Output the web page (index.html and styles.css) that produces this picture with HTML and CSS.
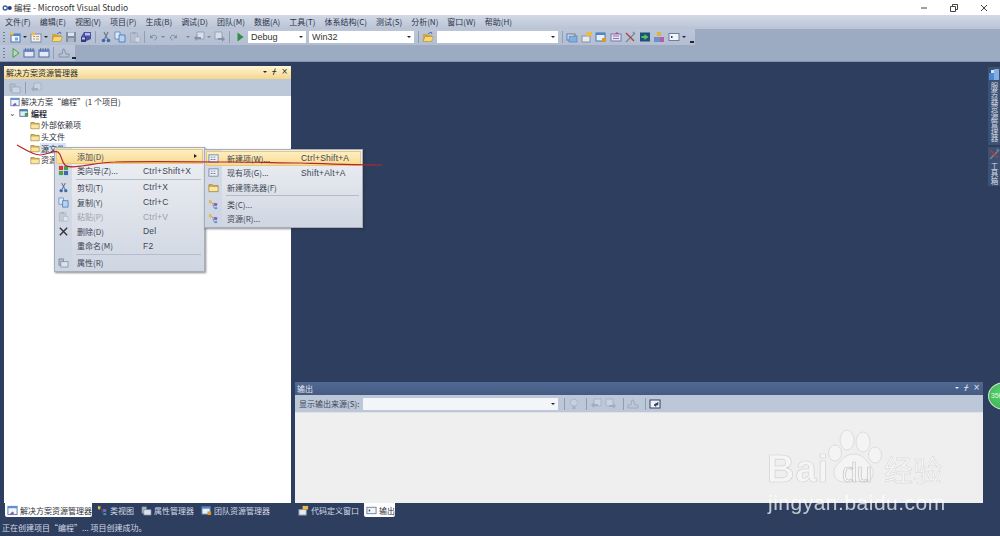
FILE: index.html
```html
<!DOCTYPE html>
<html lang="zh-CN">
<head>
<meta charset="utf-8">
<title>编程 - Microsoft Visual Studio</title>
<link rel="stylesheet" href="styles.css">
</head>
<body>
<svg class="defs" width="0" height="0">
  <defs>
    <symbol id="folder" viewBox="0 0 12 12"><path d="M1 3h4l1 1h5v6.500H1z" fill="#d9b04e" stroke="#8a7436" stroke-width=".7"/><path d="M1.500 5.500h9v4.500h-9z" fill="#f9e6a0"/></symbol>
    <symbol id="open" viewBox="0 0 12 12"><path d="M1 3h4l1 1h4v6.500H1z" fill="#d2a53f"/><path d="M1 10.500l2-5h8.500l-2 5z" fill="#f6d876" stroke="#a9842f" stroke-width=".5"/><path d="M6 3l3-2 1 2" stroke="#3f6fb5" fill="none"/></symbol>
    <symbol id="sheet" viewBox="0 0 12 12"><rect x="1" y="2" width="10" height="8" fill="#eef1f6" stroke="#7c8aa5"/><path d="M3 4h2v1H3zM6 4h2v1H6zM3 6.500h2v1H3zM6 6.500h2v1H6z" fill="#5f77a8"/></symbol>
    <symbol id="newproj" viewBox="0 0 12 12"><rect x="2" y="3" width="9" height="8" fill="#f1f4f9" stroke="#4f73ad"/><rect x="2" y="3" width="9" height="2" fill="#4f86cf"/><rect x="6" y="6.500" width="3" height="3" fill="#75a3dc"/><path d="M3 0l.8 1.700L5.500 2.200 4 3.300l.5 1.700L3 4 1.500 5 2 3.300.5 2.200l1.700-.5z" fill="#f0bf3b"/></symbol>
    <symbol id="additem" viewBox="0 0 12 12"><rect x="1" y="3" width="10" height="8" fill="#eef1f6" stroke="#7c8aa5"/><path d="M3 5h2v1H3zM6 5h3v1H6zM3 7.500h2v1H3zM6 7.500h3v1H6z" fill="#c79a4a"/><path d="M3 0l.8 1.700 1.700.5L4 3.300l.5 1.700L3 4 1.500 5 2 3.300.5 2.200l1.700-.5z" fill="#f0bf3b"/></symbol>
    <symbol id="floppy" viewBox="0 0 12 12"><path d="M1 1h10v10H1z" fill="#7f8fa8"/><rect x="3" y="1.500" width="6" height="3.500" fill="#dfe4ec"/><rect x="3" y="7" width="6" height="4" fill="#aab5c6"/></symbol>
    <symbol id="saveall" viewBox="0 0 12 12"><path d="M4 1h7v7l-7 3H1V6z" fill="#4c4fa8"/><path d="M5 2h5v2.500H5z" fill="#b9bce6"/><path d="M1 6h5v5H1z" fill="#35387f"/><path d="M2 6.500h3v2H2z" fill="#c9cbed"/></symbol>
    <symbol id="cut" viewBox="0 0 12 12"><path d="M4 1l3.500 7M8 1L4.500 8" stroke="#66768f" stroke-width="1.100" fill="none"/><circle cx="3.500" cy="9.500" r="1.800" fill="#3c68ad"/><circle cx="8.500" cy="9.500" r="1.800" fill="#3c68ad"/></symbol>
    <symbol id="copy" viewBox="0 0 12 12"><path d="M1 1h5v7H1z" fill="#dfe9f7" stroke="#5c86bd" stroke-width=".8"/><path d="M5 4h6v7H5z" fill="#b9d2f0" stroke="#3f6fb5" stroke-width=".8"/></symbol>
    <symbol id="paste" viewBox="0 0 12 12"><path d="M1.500 2h7v9h-7z" fill="#b8c0cd" stroke="#808b9e" stroke-width=".7"/><rect x="3.500" y="1" width="3" height="2" fill="#808b9e"/><path d="M6 6h5v5H6z" fill="#eef1f5" stroke="#8f99aa" stroke-width=".7"/></symbol>
    <symbol id="undo" viewBox="0 0 12 12"><path d="M3 6c1-3 6-3 7 0 .5 2-1 4-3 4" fill="none" stroke="#7e8ca5" stroke-width="1.300"/><path d="M1.500 3v4.500H6z" fill="#7e8ca5"/></symbol>
    <symbol id="redo" viewBox="0 0 12 12"><path d="M9 6C8 3 3 3 2 6c-.5 2 1 4 3 4" fill="none" stroke="#7e8ca5" stroke-width="1.300"/><path d="M10.500 3v4.500H6z" fill="#7e8ca5"/></symbol>
    <symbol id="nav" viewBox="0 0 12 12"><path d="M4 1h7v7H4z" fill="#d9dee8" stroke="#8592a8" stroke-width=".7"/><path d="M1 7l3-3v2h4v2H4v2z" fill="#8592a8"/></symbol>
    <symbol id="navr" viewBox="0 0 12 12"><path d="M1 1h7v7H1z" fill="#d9dee8" stroke="#8592a8" stroke-width=".7"/><path d="M11 8L8 5v2H4v2h4v2z" fill="#8592a8"/></symbol>
    <symbol id="cal" viewBox="0 0 12 12"><rect x="1" y="3" width="10" height="7" fill="#e4eaf5" stroke="#4b6aa6"/><rect x="1" y="3" width="10" height="2" fill="#6d8cc6"/><path d="M2.500 1v3M5 1v3M7.500 1v3M10 1v3" stroke="#4b6aa6" stroke-width=".8"/></symbol>
    <symbol id="clean" viewBox="0 0 12 12"><path d="M1 10h10V7H8L6 2 5 2 4 7H1z" fill="none" stroke="#8592a8"/></symbol>
    <symbol id="solution" viewBox="0 0 12 12"><rect x="1" y="1.500" width="10" height="9" fill="#f2f5fa" stroke="#5578b3"/><rect x="1" y="1.500" width="10" height="2" fill="#5f8fd3"/><path d="M3 10l3-3 2 2-3 2z" fill="#8a58a8"/></symbol>
    <symbol id="project" viewBox="0 0 12 12"><rect x="1" y="2" width="9" height="8" fill="#e3ecf6" stroke="#456e8e"/><rect x="1" y="2" width="9" height="2" fill="#4d7da6"/><rect x="7" y="6" width="4" height="4" fill="#4e9a62"/></symbol>
    <symbol id="wizard" viewBox="0 0 12 12"><rect x="1" y="1" width="4.500" height="4.500" fill="#d8382e"/><rect x="6.500" y="1" width="4.500" height="4.500" fill="#45a34a"/><rect x="1" y="6.500" width="4.500" height="4.500" fill="#45a34a"/><rect x="6.500" y="6.500" width="4.500" height="4.500" fill="#3c68ad"/></symbol>
    <symbol id="props" viewBox="0 0 12 12"><path d="M1 2h5v7H1z" fill="#aeb9cb" stroke="#6f7d95" stroke-width=".7"/><path d="M3 5h8v6H3z" fill="#dce2ec" stroke="#6f7d95" stroke-width=".7"/></symbol>
    <symbol id="cls" viewBox="0 0 12 12"><path d="M1 1l3 .5L3.500 5 1 4.500z" fill="#e4b93d"/><path d="M7 4l3.500 1-1 3L6 7z" fill="#8a5fb8"/><path d="M7 9h3v2H7z" fill="#4a9ad0"/><path d="M4 4l3 2M5 6l2 4" stroke="#667" stroke-width=".6"/></symbol>
    <symbol id="tool1" viewBox="0 0 12 12"><rect x="1" y="3" width="8" height="6" fill="#e7edf6" stroke="#5578b3"/><rect x="3" y="5" width="8" height="6" fill="#7fb0de" stroke="#4c76ab" stroke-width=".6"/><path d="M7 2l2 1.500L7 5z" fill="#d8a636"/></symbol>
    <symbol id="tool2" viewBox="0 0 12 12"><rect x="1" y="5" width="8" height="6" fill="#e8ebf0" stroke="#8592a8"/><path d="M5 1h6v4H5z" fill="#e9b949"/></symbol>
    <symbol id="tool3" viewBox="0 0 12 12"><rect x="1" y="2" width="9" height="8" fill="#eaf0f8" stroke="#4c76ab"/><rect x="1" y="2" width="9" height="2" fill="#4c86cc"/><rect x="7" y="7" width="4" height="4" fill="#d89a2c"/></symbol>
    <symbol id="tool4" viewBox="0 0 12 12"><rect x="1" y="3" width="10" height="7" fill="#e9e3f2" stroke="#6d7fae"/><path d="M3 5h6M3 7.500h6" stroke="#a06bb8"/><path d="M7 1l2 2H5z" fill="#c0467a"/></symbol>
    <symbol id="wrench" viewBox="0 0 12 12"><path d="M2 11l8-8" stroke="#7a8699" stroke-width="1.300"/><path d="M9 1l2 2" stroke="#7a8699" stroke-width="1.500"/><path d="M2 2l8 8" stroke="#b33a3a" stroke-width="1.300"/></symbol>
    <symbol id="gopage" viewBox="0 0 12 12"><rect x="1" y="1.500" width="10" height="9" fill="#1e4f7d"/><path d="M2.500 5h3V3l4 3-4 3V7h-3z" fill="#56c653"/></symbol>
    <symbol id="team" viewBox="0 0 12 12"><rect x="4" y="1" width="4" height="4" fill="#e0b23c"/><rect x="1" y="6" width="10" height="5" fill="#6f8fca"/><rect x="7" y="6" width="4" height="5" fill="#b15fae"/></symbol>
    <symbol id="term" viewBox="0 0 12 12"><rect x="1" y="2.500" width="10" height="7" fill="#f1f4f9" stroke="#6d7f9f"/><rect x="3" y="5" width="1.500" height="2" fill="#30405e"/></symbol>
    <symbol id="server" viewBox="0 0 12 12"><rect x="1" y="5" width="5" height="7" fill="#4f86cf"/><rect x="6" y="1" width="5" height="11" fill="#83aee3"/><rect x="3" y="2" width="3" height="3" fill="#d5e3f6"/></symbol>
    <symbol id="bulb" viewBox="0 0 12 12"><circle cx="6" cy="4.500" r="3.500" fill="#d3d9e3" stroke="#8b97aa" stroke-width=".7"/><rect x="4.500" y="8.500" width="3" height="2.500" fill="#8b97aa"/></symbol>
    <symbol id="wrap" viewBox="0 0 12 12"><rect x="1" y="2" width="10" height="8" fill="#eef2f8" stroke="#30405e"/><path d="M9 4v3H5M5 7l2-1.500v3z" stroke="#30405e" fill="#30405e" stroke-width=".6"/></symbol>
  </defs>
</svg>
<div class="app">
  <header class="titlebar">
    <svg class="logo" viewBox="0 0 12 8" width="11" height="8"><circle cx="3.500" cy="4" r="2.200" fill="none" stroke="#3c5f9c" stroke-width="1.500"/><circle cx="8.500" cy="4" r="2.200" fill="#1c3f7c"/></svg>
    <span class="title-text">编程 - Microsoft Visual Studio</span>
    <div class="winbtns">
      <svg width="8" height="8" viewBox="0 0 8 8"><path d="M1 4h6" stroke="#444"/></svg>
      <svg width="8" height="8" viewBox="0 0 8 8"><path d="M.5 2.500h5v5h-5zM2.500 2.500V.5h5v5h-2" fill="none" stroke="#444"/></svg>
      <svg width="8" height="8" viewBox="0 0 8 8"><path d="M1 1l6 6M7 1L1 7" stroke="#444" fill="none"/></svg>
    </div>
  </header>
  <nav class="menubar">
    <span>文件(F)</span><span>编辑(E)</span><span>视图(V)</span><span>项目(P)</span><span>生成(B)</span><span>调试(D)</span><span>团队(M)</span><span>数据(A)</span><span>工具(T)</span><span>体系结构(C)</span><span>测试(S)</span><span>分析(N)</span><span>窗口(W)</span><span>帮助(H)</span>
  </nav>
  <div class="toolrow">
    <div class="toolbar tb-one">
      <i class="grip"></i>
      <svg class="ti"><use href="#newproj"/></svg><i class="arrow"></i>
      <svg class="ti"><use href="#additem"/></svg><i class="arrow"></i>
      <svg class="ti"><use href="#open"/></svg>
      <svg class="ti"><use href="#floppy"/></svg>
      <svg class="ti"><use href="#saveall"/></svg>
      <i class="sep"></i>
      <svg class="ti"><use href="#cut"/></svg>
      <svg class="ti"><use href="#copy"/></svg>
      <svg class="ti dim"><use href="#paste"/></svg>
      <i class="sep"></i>
      <svg class="ti narrow"><use href="#undo"/></svg><i class="arrow dimmed a1"></i>
      <svg class="ti narrow"><use href="#redo"/></svg><i class="arrow dimmed a2"></i>
      <svg class="ti"><use href="#nav"/></svg><i class="arrow dimmed"></i>
      <svg class="ti"><use href="#navr"/></svg>
      <i class="sep"></i>
      <svg class="ti" viewBox="0 0 12 12"><path d="M3.500 1.500l6 4.500-6 4.500z" fill="#2f8f3c"/></svg>
      <div class="combo c-debug"><span>Debug</span><i class="arrow"></i></div>
      <div class="combo c-win"><span>Win32</span><i class="arrow"></i></div>
      <i class="sep"></i>
      <svg class="ti"><use href="#open"/></svg>
      <div class="combo c-find"><span></span><i class="arrow"></i></div>
      <i class="sep"></i>
      <svg class="ti"><use href="#tool1"/></svg>
      <svg class="ti"><use href="#tool2"/></svg>
      <svg class="ti"><use href="#tool3"/></svg>
      <svg class="ti"><use href="#tool4"/></svg>
      <svg class="ti"><use href="#wrench"/></svg>
      <svg class="ti"><use href="#gopage"/></svg>
      <svg class="ti"><use href="#team"/></svg>
      <svg class="ti"><use href="#term"/></svg><i class="arrow"></i>
      <i class="more"></i>
    </div>
  </div>
  <div class="toolrow">
    <div class="toolbar tb-two">
      <i class="grip"></i>
      <svg class="ti" viewBox="0 0 12 12"><path d="M4 1.500l6 4.500-6 4.500z" fill="#b5dcae" stroke="#3f9350" stroke-width=".9"/></svg>
      <svg class="ti"><use href="#cal"/></svg>
      <svg class="ti"><use href="#cal"/></svg>
      <i class="sep"></i>
      <svg class="ti"><use href="#clean"/></svg>
      <i class="more"></i>
    </div>
  </div>
  <main class="workspace">
    <section class="left-col">
      <div class="pane solution">
        <div class="pane-title active">
          <span>解决方案资源管理器</span>
          <div class="pane-btns"><i class="arrow"></i><b>ᚋ</b><b>×</b></div>
        </div>
        <div class="pane-tools">
          <svg class="ti dim"><use href="#props"/></svg><i class="sep"></i><svg class="ti dim"><use href="#nav"/></svg>
        </div>
        <ul class="tree">
          <li class="lv0"><svg class="ni"><use href="#solution"/></svg>解决方案“编程”(1 个项目)</li>
          <li class="lv1"><span class="chev">⌄</span><svg class="ni"><use href="#project"/></svg><strong>编程</strong></li>
          <li class="lv2"><svg class="ni"><use href="#folder"/></svg>外部依赖项</li>
          <li class="lv2"><svg class="ni"><use href="#folder"/></svg>头文件</li>
          <li class="lv2"><svg class="ni"><use href="#folder"/></svg><span class="selected">源文件</span></li>
          <li class="lv2"><svg class="ni"><use href="#folder"/></svg>资源文件</li>
        </ul>
      </div>
      <div class="tabs">
        <span class="tab on"><svg class="ti"><use href="#solution"/></svg>解决方案资源管理器</span>
        <span class="tab"><svg class="ti"><use href="#cls"/></svg>类视图</span>
        <span class="tab"><svg class="ti"><use href="#props"/></svg>属性管理器</span>
        <span class="tab"><svg class="ti"><use href="#tool3"/></svg>团队资源管理器</span>
      </div>
    </section>
    <section class="right-col">
      <div class="doc-space"></div>
      <div class="pane output">
        <div class="pane-title dark">
          <span>输出</span>
          <div class="pane-btns"><i class="arrow"></i><b>ᚋ</b><b>×</b></div>
        </div>
        <div class="pane-tools out-tools">
          <label>显示输出来源(S):</label>
          <div class="combo c-out"><span></span><i class="arrow"></i></div>
          <i class="sep"></i><svg class="ti dim"><use href="#bulb"/></svg>
          <i class="sep"></i><svg class="ti dim"><use href="#nav"/></svg><svg class="ti dim"><use href="#navr"/></svg>
          <i class="sep"></i><svg class="ti dim"><use href="#clean"/></svg>
          <i class="sep"></i><svg class="ti"><use href="#wrap"/></svg>
        </div>
        <div class="out-body"></div>
      </div>
      <div class="tabs">
        <span class="tab"><svg class="ti"><use href="#tool2"/></svg>代码定义窗口</span>
        <span class="tab on"><svg class="ti"><use href="#term"/></svg>输出</span>
      </div>
    </section>
    <aside class="side-dock">
      <div class="side-tab s1"><svg class="ti"><use href="#server"/></svg><span>服务器资源管理器</span></div>
      <div class="side-tab s2"><svg class="ti"><use href="#wrench"/></svg><span>工具箱</span></div>
    </aside>
  </main>
  <footer class="statusbar">正在创建项目“编程”... 项目创建成功。</footer>

  <div class="menu ctx">
    <div class="mi hot"><span class="ic"></span><span class="lb">添加(D)</span><span class="sc"></span><i class="caret"></i></div>
    <div class="mi"><span class="ic"><svg><use href="#wizard"/></svg></span><span class="lb">类向导(Z)...</span><span class="sc">Ctrl+Shift+X</span></div>
    <div class="ms"></div>
    <div class="mi"><span class="ic"><svg><use href="#cut"/></svg></span><span class="lb">剪切(T)</span><span class="sc">Ctrl+X</span></div>
    <div class="mi"><span class="ic"><svg><use href="#copy"/></svg></span><span class="lb">复制(Y)</span><span class="sc">Ctrl+C</span></div>
    <div class="mi off"><span class="ic"><svg><use href="#paste"/></svg></span><span class="lb">粘贴(P)</span><span class="sc">Ctrl+V</span></div>
    <div class="mi"><span class="ic"><svg viewBox="0 0 12 12"><path d="M2 2l8 8M10 2l-8 8" stroke="#333" stroke-width="1.500"/></svg></span><span class="lb">删除(D)</span><span class="sc">Del</span></div>
    <div class="mi"><span class="ic"></span><span class="lb">重命名(M)</span><span class="sc">F2</span></div>
    <div class="ms"></div>
    <div class="mi"><span class="ic"><svg><use href="#props"/></svg></span><span class="lb">属性(R)</span><span class="sc"></span></div>
  </div>
  <div class="menu sub">
    <div class="mi hot"><span class="ic"><svg><use href="#sheet"/></svg></span><span class="lb">新建项(W)...</span><span class="sc">Ctrl+Shift+A</span></div>
    <div class="mi"><span class="ic"><svg><use href="#sheet"/></svg></span><span class="lb">现有项(G)...</span><span class="sc">Shift+Alt+A</span></div>
    <div class="mi"><span class="ic"><svg><use href="#folder"/></svg></span><span class="lb">新建筛选器(F)</span><span class="sc"></span></div>
    <div class="ms"></div>
    <div class="mi"><span class="ic"><svg><use href="#cls"/></svg></span><span class="lb">类(C)...</span><span class="sc"></span></div>
    <div class="mi"><span class="ic"><svg><use href="#cls"/></svg></span><span class="lb">资源(R)...</span><span class="sc"></span></div>
  </div>

  <svg class="redline" viewBox="0 0 1000 536" width="1000" height="536">
    <path d="M17 145C26 150 33 155 40 155C47 155 54 150 58 152C62 155 61 161 65 165C68 168 74 167 82 166C95 164 103 162 115 162C155 161 195 162 233 162C260 162 280 163 300 163C330 164 355 165 382 165" fill="none" stroke="#b3262c" stroke-width="1.200"/>
  </svg>
  <div class="badge">350</div>
  <div class="watermark">
    <svg class="paw" viewBox="0 0 60 56" width="60" height="56">
      <ellipse cx="19" cy="11" rx="7" ry="10"/><ellipse cx="35" cy="13" rx="7" ry="10"/><ellipse cx="7" cy="24" rx="6.500" ry="8"/><ellipse cx="47" cy="26" rx="6.500" ry="8"/><path d="M26 25c8 0 12 6 17 12 5 7 1 17-8 16-3 0-6-1-9-1s-6 2-10 1C7 53 3 44 8 37c5-5 9-12 18-12z"/>
    </svg>
    <div class="wm-line"><span class="wm-bai">Bai</span><span class="wm-du">du</span><span class="wm-cn">经验</span></div>
    <div class="wm-url">jingyan.baidu.com</div>
  </div>
</div>
</body>
</html>
```

FILE: styles.css
```css
* { box-sizing: border-box; }
html, body { margin: 0; padding: 0; }
body { width: 1000px; height: 536px; overflow: hidden; font-family: "Noto Sans CJK SC", "Liberation Sans", sans-serif; font-size: 8px; color: #2a3244; }
.defs { position: absolute; }
ul { list-style: none; margin: 0; padding: 0; }
i { font-style: normal; display: block; }
.app { position: relative; width: 1000px; height: 536px; display: flex; flex-direction: column; background: #2d3e5e; filter: blur(.35px); }

.titlebar { height: 15px; background: #fff; display: flex; align-items: center; padding-left: 2px; flex: none; }
.logo { margin-right: 1px; }
.title-text { font-size: 8.500px; color: #333; padding-bottom: 1px; }
.winbtns { margin-left: auto; display: flex; gap: 22px; padding-right: 12px; }

.menubar { height: 14px; flex: none; display: flex; gap: 9px; align-items: center; padding: 0 0 1px 5px; background: linear-gradient(#d3d9e5, #b9c3d6); color: #2b3448; }

.toolrow { height: 16px; flex: none; background: #9cabc1; display: flex; }
.toolbar { height: 16px; display: flex; align-items: center; background: linear-gradient(#bcc6d8, #b3bed2); padding-left: 3px; gap: 2.500px; }
.tb-one { width: 695px; }
.tb-two { width: 75px; }
.grip { width: 2px; height: 11px; margin-right: 1px; background: repeating-linear-gradient(#6e7d97 0 1px, transparent 1px 3px); flex: none; }
.ti { width: 12px; height: 12px; flex: none; }
.narrow { width: 9px; }
.dim { opacity: .5; }
.arrow { width: 0; height: 0; border-left: 2px solid transparent; border-right: 2px solid transparent; border-top: 2px solid #1e2738; flex: none; }
.dimmed { opacity: .4; }
.a1 { margin-left: 1px; margin-right: 1px; }
.a2 { margin-left: 6px; }
.sep { width: 1px; height: 12px; background: #8f9db5; margin: 0 1px; flex: none; }
.more { width: 4px; height: 7px; margin-left: auto; margin-right: 1px; border-bottom: 2px solid #1e2738; position: relative; top: 2px; flex: none; }
.combo { height: 12px; background: #fff; display: flex; align-items: center; justify-content: space-between; padding: 0 3px; flex: none; font-family: "Liberation Sans", sans-serif; font-size: 9px; color: #333; }
.c-debug { width: 58px; }
.c-win { width: 105px; margin-left: .5px; }
.c-find { width: 121px; margin-left: .5px; }
.c-out { width: 195px; background: #f4f5f9; }

.workspace { flex: 1; min-height: 0; display: flex; background: #2d3e5e; padding: 4px 0 0 4px; border-top: 1px solid #8796ae; }
.left-col { width: 287px; display: flex; flex-direction: column; flex: none; margin-right: 4px; }
.right-col { width: 688px; display: flex; flex-direction: column; flex: none; }
.doc-space { flex: 1; }
.pane { display: flex; flex-direction: column; }
.solution { flex: 1; background: #fff; min-height: 0; }
.pane-title { height: 13px; display: flex; align-items: center; padding: 0 2px 1px 2px; flex: none; }
.pane-title.active { background: linear-gradient(#fff6d8, #f4d68a); color: #2a2a2a; }
.pane-title.dark { background: linear-gradient(#516a93, #445a82); color: #e7ebf2; }
.pane-btns { margin-left: auto; display: flex; gap: 5px; align-items: center; padding-right: 1px; }
.pane-btns b { font-weight: 400; font-size: 8px; line-height: 8px; font-family: "DejaVu Sans", sans-serif; }
.dark .arrow { border-top-color: #e7ebf2; }
.pane-tools { height: 17px; background: #bcc7d8; display: flex; align-items: center; padding-left: 5px; gap: 3px; flex: none; }
.tree { color: #2d3038; }
.tree li { height: 11.600px; display: flex; align-items: center; white-space: nowrap; position: relative; }
.ni { width: 10px; height: 10px; margin-right: 1px; flex: none; }
.lv0 { padding-left: 6px; }
.lv1 { padding-left: 15px; }
.lv2 { padding-left: 26px; }
.lv1 strong { margin-left: 1px; }
.chev { position: absolute; left: 5px; top: -1px; color: #555; }
.selected { background: #d7e6f6; padding: 0 1px; margin-left: -1px; }

.output { height: 121px; flex: none; }
.out-tools { padding-left: 4px; gap: 3px; }
.out-tools label { color: #3c4558; margin-right: 1px; }
.out-tools .sep { margin: 0 0 0 3px; }
.out-body { flex: 1; background: #efefef; border-top: 1px solid #e0e3ea; }

.tabs { height: 15px; flex: none; display: flex; padding-left: 1px; color: #d5dbe7; }
.tab { display: flex; align-items: center; gap: 2px; padding: 0 2px; height: 14px; white-space: nowrap; }
.tab + .tab { margin-left: 3px; }
.tab .ti { width: 11px; height: 11px; }
.tab.on { background: #fff; color: #2d3038; border-radius: 0 0 2px 2px; padding-right: 0; }

.side-dock { flex: 1; display: flex; flex-direction: column; align-items: flex-end; gap: 2px; padding-top: 1px; }
.side-tab { width: 12px; background: #3d5173; display: flex; flex-direction: column; align-items: center; color: #d5dbe7; padding-top: 1px; }
.s1 { height: 78px; }
.s2 { height: 39px; }
.side-tab span { writing-mode: vertical-rl; margin-top: 2px; line-height: 12px; font-size: 7.500px; }

.statusbar { height: 18px; flex: none; color: #d5dbe7; padding-left: 2px; padding-top: 4px; }

.menu { position: absolute; background-image: linear-gradient(90deg, rgba(205,212,226,.7) 0 17px, transparent 17px), linear-gradient(#eef0f3, #cfd6e2); box-shadow: 1px 1px 2px rgba(40,40,40,.55); border: 1px solid #a6aebd; padding: 1px; z-index: 2; }
.ctx { left: 54px; top: 147px; width: 151px; height: 125px; }
.sub { left: 204px; top: 149px; width: 159px; height: 79px; z-index: 3; }
.mi { height: 14.600px; display: flex; align-items: center; position: relative; color: #3d4454; }
.hot { background: linear-gradient(#fdf0c4, #f8d98d); outline: 1px solid #e9c777; outline-offset: -1px; }
.off { color: #99a0ae; }
.off .ic svg { opacity: .5; }
.ic { width: 15px; height: 100%; display: flex; align-items: center; justify-content: center; flex: none; }
.ic svg { width: 11px; height: 11px; }
.lb { margin-left: 6px; width: 66px; flex: none; white-space: nowrap; }
.sub .lb { width: 74px; }
.sc { font-family: "Liberation Sans", sans-serif; font-size: 8.500px; letter-spacing: .2px; white-space: nowrap; }
.ms { height: 1px; background: #b5bdcb; margin: .5px 2px .5px 20px; }
.caret { position: absolute; right: 6px; top: 5px; border-left: 3px solid #222; border-top: 2px solid transparent; border-bottom: 2px solid transparent; }

.redline { position: absolute; left: 0; top: 0; z-index: 4; pointer-events: none; }
.badge { position: absolute; left: 988px; top: 382px; width: 34px; height: 28px; border-radius: 50%; background: radial-gradient(circle at 40% 40%, #59d36c, #2fa84b); border: 1px solid #cfe9d2; color: #e8f7ea; font: 7px "Liberation Sans", sans-serif; padding: 9px 0 0 2px; z-index: 3; }

.watermark { position: absolute; left: 767px; top: 429px; width: 180px; z-index: 5; color: rgba(255,255,255,.62); font-family: "Liberation Sans", sans-serif; }
.paw { position: absolute; left: 61px; top: 0; fill: #f4f4f5; fill-opacity: .85; stroke: #d2d2d6; stroke-width: .7; }
.wm-line { position: absolute; top: 18px; left: 0; display: flex; align-items: baseline; white-space: nowrap; }
.wm-bai { font-size: 38px; line-height: 44px; letter-spacing: 1px; font-weight: 700; color: rgba(247,247,248,.72); -webkit-text-stroke: .6px #d0d0d4; width: 63px; flex: none; }
.wm-du { font-size: 27px; width: 54px; text-align: center; color: #f8f8f8; -webkit-text-stroke: .6px #b9b9bd; position: relative; z-index: 1; flex: none; }
.wm-cn { font-size: 29px; font-family: "Noto Sans CJK SC", sans-serif; line-height: 36px; color: rgba(247,247,248,.8); -webkit-text-stroke: .4px #d0d0d4; }
.wm-url { position: absolute; top: 62px; left: 1px; font-size: 21px; line-height: 24px; letter-spacing: .5px; white-space: nowrap; color: rgba(255,255,255,.72); }
```
